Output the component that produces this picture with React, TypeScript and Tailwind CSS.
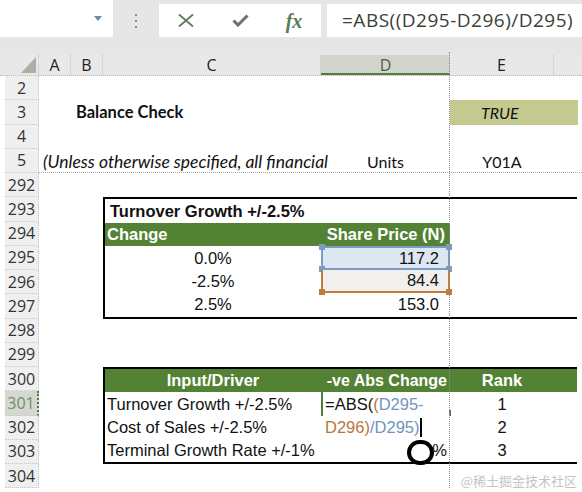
import React from 'react'

const COLS = 'grid grid-cols-[32px_32px_218px_129px_104px_24px_1fr]'
const ARIAL = "font-['Liberation_Sans',Arial,sans-serif]"
const CAL = "font-['Lato',sans-serif]"
const UI = "font-['Open_Sans',sans-serif]"

const rowNums = ['2', '3', '4', '5', '292', '293', '294', '295', '296', '297', '298', '299', '300', '301', '302', '303', '304']

function Handle({ className }: { className: string }) {
  return <span className={`absolute h-[6px] w-[6px] ${className}`} />
}

function Row({ children, className = '' }: { children?: React.ReactNode; className?: string }) {
  return <div className={`${COLS} h-[24.25px] ${className}`}>{children}</div>
}

export default function App() {
  return (
    <div className="relative h-[492px] w-[582px] overflow-hidden bg-white text-[#111]">
      {/* formula bar */}
      <div className="flex h-[37px] bg-[#e6e6e6]">
        <div className="flex w-[113px] items-center justify-end bg-white pr-[11px]">
          <svg width="8" height="5" viewBox="0 0 8 5">
            <path d="M0 0h8L4 5z" fill="#6b8aa6" />
          </svg>
        </div>
        <div className="flex w-[46px] items-center justify-center pt-[4px]">
          <svg width="4" height="16" viewBox="0 0 4 16">
            <rect x="1" y="1" width="2" height="2" fill="#8a8a8a" />
            <rect x="1" y="7" width="2" height="2" fill="#8a8a8a" />
            <rect x="1" y="13" width="2" height="2" fill="#8a8a8a" />
          </svg>
        </div>
        <div className="mt-[4px] flex w-[162px] bg-white">
          <div className="flex w-[54px] items-center justify-center">
            <svg width="18" height="15" viewBox="0 0 18 15">
              <path d="M2 1.5L16 13.5M16 1.5L2 13.5" stroke="#5f7d5a" strokeWidth="1.8" />
            </svg>
          </div>
          <div className="flex w-[54px] items-center justify-center">
            <svg width="17" height="13" viewBox="0 0 17 13">
              <path d="M1.5 6.5L6 11L15.5 1.5" stroke="#6e6e6e" strokeWidth="3" fill="none" />
            </svg>
          </div>
          <div className="flex w-[54px] items-center justify-center">
            <span className="font-['Liberation_Serif',serif] text-[20px] font-bold italic leading-none text-[#5a7a58]">fx</span>
          </div>
        </div>
        <div className="w-[6px]" />
        <div className={`mt-[4px] flex flex-1 items-center bg-white pl-[15px] text-[19px] tracking-[0.5px] text-[#3a3f38] ${UI}`}>
          =ABS((D295-D296)/D295)
        </div>
      </div>
      <div className="h-[18px] bg-[#e6e6e6]" />

      {/* column headers */}
      <div className={`flex h-[21px] border-b border-dotted border-[#b9b9b9] bg-[#e8e8e8] text-[16px] leading-[20px] text-[#222] ${UI}`}>
        <div className="relative w-[39px] border-r border-dotted border-[#c3c3c3]">
          <svg className="absolute left-[21px] top-[2px]" width="15" height="16" viewBox="0 0 15 16">
            <path d="M15 0V16H0z" fill="#a8b2a4" />
          </svg>
        </div>
        <div className="w-[32px] border-r border-dotted border-[#c3c3c3] text-center">A</div>
        <div className="w-[32px] border-r border-dotted border-[#c3c3c3] text-center">B</div>
        <div className="w-[218px] border-r border-dotted border-[#c3c3c3] text-center">C</div>
        <div className="w-[129px] border-b-2 border-[#4f7e3c] bg-[#d2d4ce] text-center text-[#4b5e42]">D</div>
        <div className="w-[104px] border-r border-dotted border-[#c3c3c3] text-center">E</div>
        <div className="flex-1" />
      </div>

      {/* body */}
      <div className="flex">
        <div className={`flex w-[39px] flex-col pl-[5px] text-[16px] text-[#333] ${UI}`}>
          {rowNums.map((n) => (
            <div
              key={n}
              className={`flex h-[24.25px] items-center justify-center border-b border-dotted border-[#c6c6c6] ${
                n === '301'
                  ? 'border-r-2 border-r-[#4f7e3c] border-r-solid bg-[#d5d8d1] text-[#6f8f68]'
                  : 'border-r border-r-[#c6c6c6] bg-[#efefef]'
              }`}
            >
              {n}
            </div>
          ))}
        </div>

        <div className="flex-1">
          <Row />
          <Row className={`items-center ${CAL}`}>
            <div />
            <div className="col-span-3 pl-[5px] text-[16.5px] font-bold">Balance Check</div>
            <div className="col-span-2 flex h-full items-center bg-[#c4c98f] pl-[31px] text-[16px] italic">TRUE</div>
          </Row>
          <Row />
          <Row className={`items-center border-b border-dotted border-[#a8a8a8] text-[16px] ${CAL}`}>
            <div className="col-span-3 whitespace-nowrap pl-[4px] text-[17.5px] italic">
              (Unless otherwise specified, all financial
            </div>
            <div className="text-center">Units</div>
            <div className="text-center">Y01A</div>
          </Row>
          <Row />

          {/* table 1 */}
          <div className={`ml-[64px] grid h-[121.25px] w-[474px] grid-cols-[216px_129px_1fr] grid-rows-5 border-y-2 border-l-2 border-black text-[16.5px] ${ARIAL}`}>
            <div className="col-span-3 flex items-center pl-[5px] font-bold">Turnover Growth +/-2.5%</div>
            <div className="flex items-center bg-[#548235] pl-[2px] font-bold text-white">Change</div>
            <div className="flex items-center justify-end bg-[#548235] pr-[5px] font-bold text-white">Share Price (N)</div>
            <div />
            <div className="flex items-center justify-center">0.0%</div>
            <div className="relative flex items-center justify-end border-2 border-[#7b9cc2] bg-[#dce7f2] pr-[9px]">
              117.2
              <Handle className="-left-[4px] -top-[4px] bg-[#7b9cc2]" />
              <Handle className="-right-[4px] -top-[4px] bg-[#7b9cc2]" />
              <Handle className="-bottom-[4px] -left-[4px] bg-[#7b9cc2]" />
              <Handle className="-bottom-[4px] -right-[4px] bg-[#7b9cc2]" />
            </div>
            <div />
            <div className="flex items-center justify-center">-2.5%</div>
            <div className="relative flex items-center justify-end border-2 border-t-0 border-[#bf7c3e] bg-[#f2f0ec] pr-[9px]">
              84.4
              <Handle className="-bottom-[4px] -left-[4px] bg-[#bf7c3e]" />
              <Handle className="-bottom-[4px] -right-[4px] bg-[#bf7c3e]" />
            </div>
            <div />
            <div className="flex items-center justify-center">2.5%</div>
            <div className="flex items-center justify-end pr-[11px]">153.0</div>
            <div />
          </div>

          <Row />
          <Row />

          {/* table 2 */}
          <div className={`ml-[64px] grid h-[97px] w-[474px] grid-cols-[216px_129px_104px_1fr] grid-rows-4 border-y-2 border-l-2 border-black text-[16.5px] ${ARIAL}`}>
            <div className="flex items-center justify-center bg-[#548235] font-bold text-white">Input/Driver</div>
            <div className="flex items-center justify-end whitespace-nowrap bg-[#548235] pr-[3px] text-[16px] font-bold text-white">-ve Abs Change</div>
            <div className="flex items-center justify-center bg-[#548235] font-bold text-white">Rank</div>
            <div className="bg-[#548235]" />

            <div className="flex items-center whitespace-nowrap pl-[2px]">Turnover Growth +/-2.5%</div>
            <div className="relative flex items-center border-l-2 border-[#4f7e3c] pl-[2px]">
              <span>=ABS(</span>
              <span className="text-[#b8763a]">(</span>
              <span className="text-[#6f94bf]">D295-</span>
              <span className="absolute -right-[1px] bottom-0 h-[6px] w-[2px] bg-[#4f7e3c]" />
            </div>
            <div className="flex items-center justify-center">1</div>
            <div />

            <div className="flex items-center whitespace-nowrap pl-[2px]">Cost of Sales +/-2.5%</div>
            <div className="flex items-center pl-[4px]">
              <span className="text-[#b8763a]">D296)</span>
              <span className="text-[#6f94bf]">/D295)</span>
              <span className="ml-[1px] h-[19px] w-[1.5px] bg-black" />
            </div>
            <div className="flex items-center justify-center">2</div>
            <div />

            <div className="flex items-center whitespace-nowrap pl-[2px]">Terminal Growth Rate +/-1%</div>
            <div className="relative flex items-center justify-end pr-[3px]">
              %
              <span className="absolute left-[86px] top-[1px] h-[25px] w-[27px] rounded-full border-[4px] border-black bg-white" />
            </div>
            <div className="flex items-center justify-center">3</div>
            <div />
          </div>

          <Row />
        </div>
      </div>

      {/* freeze pane line */}
      <div className="pointer-events-none absolute bottom-[4px] left-[449px] top-[52px] border-l border-dotted border-[#8a8a8a]" />

      <div className="absolute bottom-[2px] right-[5px] font-['Noto_Sans_CJK_SC',sans-serif] text-[13px] text-[#c4c4c4]">
        @稀土掘金技术社区
      </div>
    </div>
  )
}
